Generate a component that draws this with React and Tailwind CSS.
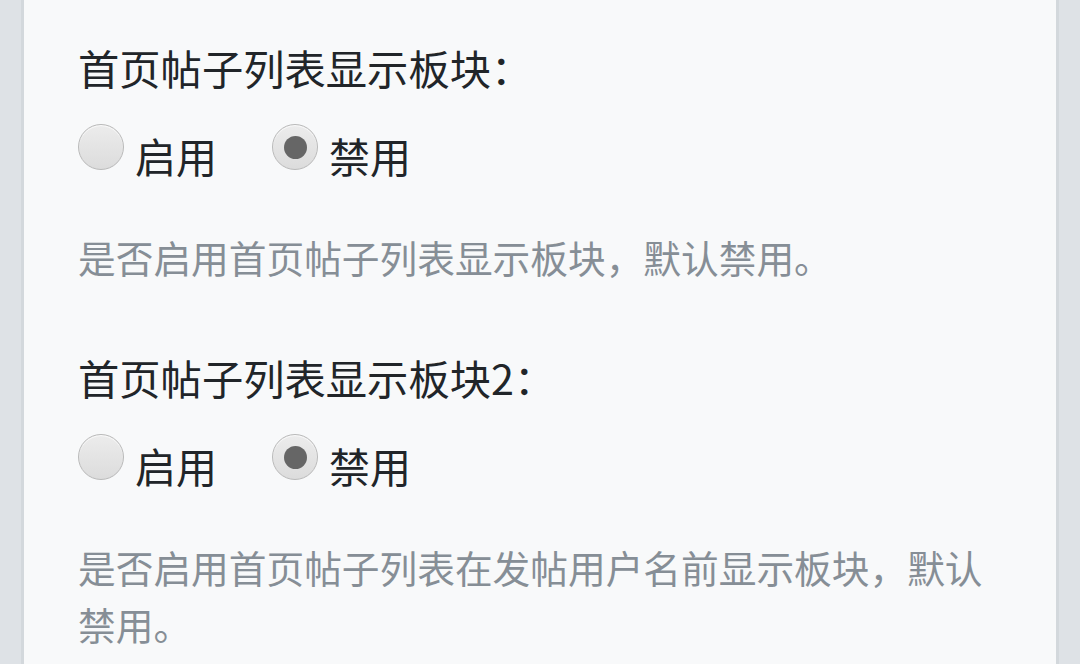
import React from "react";

function Radio({ checked, label }) {
  return (
    <label className="flex items-start">
      <span className="mt-[-1px] flex h-[46px] w-[46px] shrink-0 items-center justify-center rounded-full border border-[#b9b9b9] bg-gradient-to-b from-[#ececec] to-[#dcdcdc] shadow-[inset_0_1px_1px_rgba(255,255,255,0.8)]">
        {checked && <span className="h-[23px] w-[23px] rounded-full bg-[#666666]" />}
      </span>
      <span className="ml-[11px] text-[41px] leading-[60px] text-[#212529]">{label}</span>
    </label>
  );
}

function Section({ title, desc }) {
  return (
    <div className="flex flex-col">
      <div className="text-[41.3px] leading-[56px] text-[#212529]">{title}</div>
      <div className="mt-[30px] flex gap-[55px]">
        <Radio label="启用" />
        <Radio checked label="禁用" />
      </div>
      <div className="mt-[43px] text-[37.7px] leading-[57px] text-[#868e96]">{desc}</div>
    </div>
  );
}

export default function App() {
  return (
    <div
      className="h-[664px] w-[1080px] overflow-hidden bg-[#dee2e6] px-[21px]"
      style={{ fontFamily: '"Noto Sans CJK SC", "Noto Sans", sans-serif' }}
    >
      <div className="flex h-full flex-col gap-[64px] border-x-[3px] border-[#d3d8dc] bg-[#f8f9fa] px-[54px] pt-[39px]">
        <Section title="首页帖子列表显示板块：" desc="是否启用首页帖子列表显示板块，默认禁用。" />
        <Section
          title="首页帖子列表显示板块2："
          desc="是否启用首页帖子列表在发帖用户名前显示板块，默认禁用。"
        />
      </div>
    </div>
  );
}
